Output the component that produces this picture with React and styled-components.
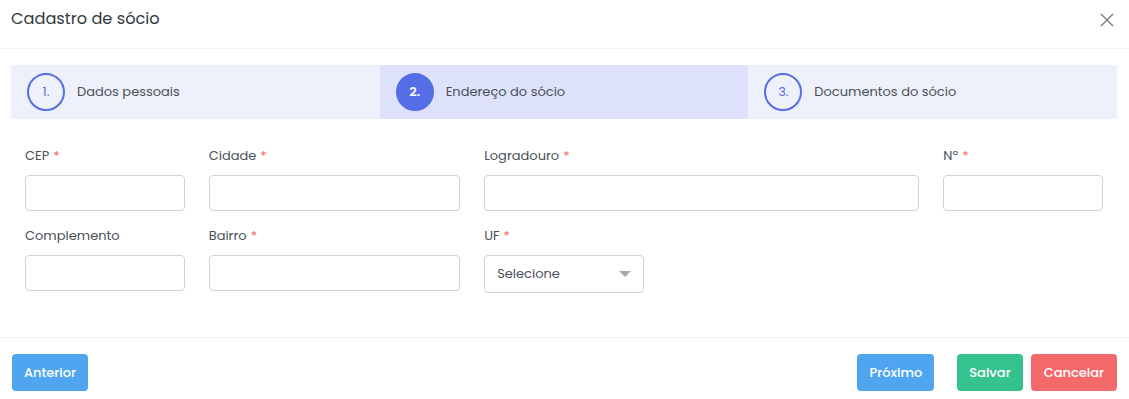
import React from 'react';
import styled, { createGlobalStyle } from 'styled-components';

const GlobalStyle = createGlobalStyle`
  html, body {
    margin: 0;
    background: #fff;
    font-family: "Poppins", "Noto Sans", "Open Sans", sans-serif;
    color: #495057;
  }
  * { box-sizing: border-box; }
`;

const Modal = styled.div`
  width: 1129px;
  height: 399px;
  background: #fff;
  display: flex;
  flex-direction: column;
`;

const Header = styled.div`
  height: 49px;
  padding: 7px 11px 0 11px;
  display: flex;
  align-items: flex-start;
  justify-content: space-between;
  border-bottom: 1px solid #eff2f7;
`;

const Title = styled.h5`
  margin: 0;
  font-size: 16.2px;
  line-height: 24px;
  font-weight: 400;
  color: #343a40;
`;

const CloseBtn = styled.button`
  border: 0;
  background: none;
  padding: 0;
  width: 16px;
  height: 16px;
  margin: 5px 3px 0 0;
  display: flex;
  cursor: pointer;
`;

const Body = styled.div`
  padding: 16px 12px 0 11px;
  flex: 1;
`;

const Steps = styled.ul`
  list-style: none;
  margin: 0;
  padding: 0;
  display: grid;
  grid-template-columns: repeat(3, 1fr);
`;

const Step = styled.li`
  height: 54px;
  padding: 8px 16px;
  display: flex;
  align-items: center;
  font-size: 13px;
  color: #495057;
  background: ${p => (p.$current ? 'rgba(85,110,230,0.2)' : 'rgba(85,110,230,0.1)')};
`;

const Num = styled.span`
  width: 38px;
  height: 38px;
  border-radius: 50%;
  border: 2px solid #556ee6;
  display: flex;
  align-items: center;
  justify-content: center;
  margin-right: 12px;
  font-size: 13px;
  color: ${p => (p.$current ? '#fff' : '#556ee6')};
  background: ${p => (p.$current ? '#556ee6' : 'transparent')};
  font-weight: ${p => (p.$current ? 600 : 400)};
`;

const Form = styled.div`
  margin-top: 27px;
  padding: 0 14px;
  display: grid;
  grid-template-columns: repeat(12, 1fr);
  column-gap: 24px;
  row-gap: 15px;
`;

const Field = styled.div`
  grid-column: span ${p => p.$span};
  display: flex;
  flex-direction: column;
`;

const Label = styled.label`
  font-size: 13px;
  font-weight: 400;
  line-height: 20px;
  margin-bottom: 9px;
  color: #495057;
`;

const Req = styled.span`
  color: #f46a6a;
  margin-left: 4px;
`;

const Input = styled.input`
  height: 36px;
  border: 1px solid #ced4da;
  border-radius: 4px;
  padding: 0 12px;
  font: inherit;
  font-size: 13px;
  outline: none;
`;

const SelectBox = styled.div`
  width: 160px;
  height: 38px;
  border: 1px solid #ced4da;
  border-radius: 4px;
  padding: 0 12px 0 12px;
  display: flex;
  align-items: center;
  justify-content: space-between;
  font-size: 13px;
  color: #495057;
`;

const Caret = styled.span`
  width: 0;
  height: 0;
  border-left: 6px solid transparent;
  border-right: 6px solid transparent;
  border-top: 6px solid #aaa;
`;

const Footer = styled.div`
  border-top: 1px solid #eff2f7;
  padding: 16px 12px 8px 12px;
  display: flex;
  align-items: center;
`;

const Spacer = styled.div`
  flex: 1;
`;

const Button = styled.button`
  height: 37px;
  border: 0;
  border-radius: 4px;
  padding: 0 ${p => p.$px || 12}px;
  margin-left: ${p => p.$ml || 0}px;
  color: #fff;
  font-family: inherit;
  font-size: 13px;
  font-weight: 500;
  cursor: pointer;
  background: ${p => p.$color};
`;

const fieldsRow1 = [
  { label: 'CEP', span: 2, req: true },
  { label: 'Cidade', span: 3, req: true },
  { label: 'Logradouro', span: 5, req: true },
  { label: 'Nº', span: 2, req: true },
];

const fieldsRow2 = [
  { label: 'Complemento', span: 2 },
  { label: 'Bairro', span: 3, req: true },
];

export default function App() {
  return (
    <>
      <GlobalStyle />
      <Modal>
        <Header>
          <Title>Cadastro de sócio</Title>
          <CloseBtn aria-label="Fechar">
            <svg width="16" height="16" viewBox="0 0 16 16">
              <path d="M2 2 L14 14 M14 2 L2 14" stroke="#777" strokeWidth="1.3" fill="none" />
            </svg>
          </CloseBtn>
        </Header>
        <Body>
          <Steps>
            <Step><Num>1.</Num>Dados pessoais</Step>
            <Step $current><Num $current>2.</Num>Endereço do sócio</Step>
            <Step><Num>3.</Num>Documentos do sócio</Step>
          </Steps>
          <Form>
            {[...fieldsRow1, ...fieldsRow2].map(f => (
              <Field key={f.label} $span={f.span}>
                <Label>{f.label}{f.req && <Req>*</Req>}</Label>
                <Input />
              </Field>
            ))}
            <Field $span={5}>
              <Label>UF<Req>*</Req></Label>
              <SelectBox>Selecione<Caret /></SelectBox>
            </Field>
          </Form>
        </Body>
        <Footer>
          <Button $color="#50a5f1">Anterior</Button>
          <Spacer />
          <Button $color="#50a5f1">Próximo</Button>
          <Button $color="#34c38f" $ml={23}>Salvar</Button>
          <Button $color="#f46a6a" $ml={8} $px={13}>Cancelar</Button>
        </Footer>
      </Modal>
    </>
  );
}
